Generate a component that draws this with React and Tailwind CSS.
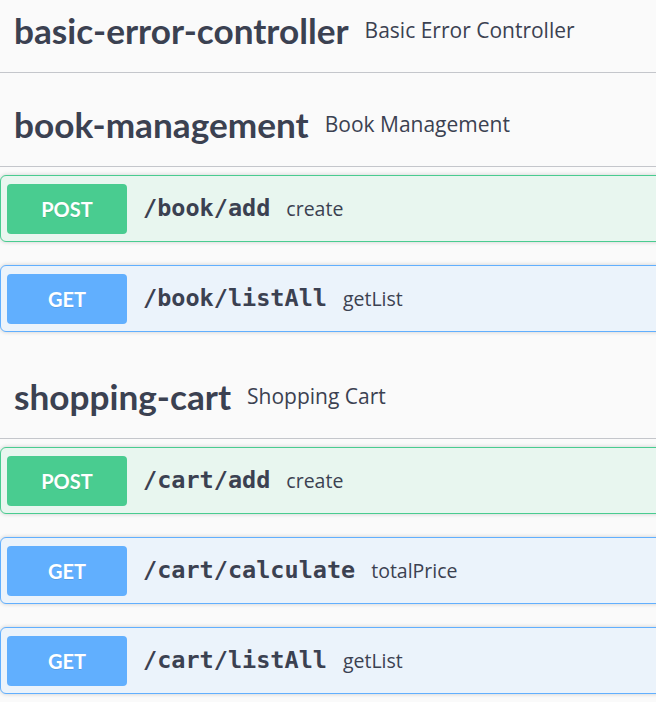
import React from 'react';

const tags = [
  { name: 'basic-error-controller', description: 'Basic Error Controller', ops: [] },
  {
    name: 'book-management',
    description: 'Book Management',
    ops: [
      { method: 'POST', path: '/book/add', summary: 'create' },
      { method: 'GET', path: '/book/listAll', summary: 'getList' },
    ],
  },
  {
    name: 'shopping-cart',
    description: 'Shopping Cart',
    ops: [
      { method: 'POST', path: '/cart/add', summary: 'create' },
      { method: 'GET', path: '/cart/calculate', summary: 'totalPrice' },
      { method: 'GET', path: '/cart/listAll', summary: 'getList' },
    ],
  },
];

const methodStyles = {
  POST: {
    block: 'border-[#49cc90] bg-[#e8f6ef]',
    badge: 'bg-[#49cc90]',
  },
  GET: {
    block: 'border-[#61affe] bg-[#ebf3fb]',
    badge: 'bg-[#61affe]',
  },
};

function OpBlock({ method, path, summary }) {
  const style = methodStyles[method];
  return (
    <div
      className={`mb-[23px] flex h-[67px] items-center rounded-[6px] border px-[6px] shadow-[0_0_4px_rgba(0,0,0,0.19)] ${style.block}`}
    >
      <span
        className={`flex h-[50px] w-[120px] shrink-0 items-center justify-center rounded-[4px] font-['Lato',sans-serif] text-[20px] font-bold text-white [text-shadow:0_1px_0_rgba(0,0,0,0.1)] ${style.badge}`}
      >
        {method}
      </span>
      <span className="ml-[16px] mt-[1px] font-['DejaVu_Sans_Mono',monospace] text-[23.5px] font-bold text-[#3b4151]">
        {path}
      </span>
      <span className="ml-[16px] font-['Open_Sans',sans-serif] text-[19.5px] text-[#3b4151]">
        {summary}
      </span>
    </div>
  );
}

function TagSection({ name, description, ops, first }) {
  return (
    <section className={first ? '-mt-[11px] mb-[10px]' : 'mb-[3px]'}>
      <h3 className="mb-[8px] flex h-[84px] items-center border-b border-[#c4c6cb] pl-[14px] text-[#3b4151]">
        <span className="font-['Lato',sans-serif] text-[35.2px] font-bold">{name}</span>
        <small className="ml-[16px] font-['Open_Sans',sans-serif] text-[21px]">{description}</small>
      </h3>
      {ops.map((op) => (
        <OpBlock key={op.path} {...op} />
      ))}
    </section>
  );
}

export default function App() {
  return (
    <div className="h-[702px] w-[656px] overflow-hidden bg-[#fafafa]">
      <div className="-mt-[1px] w-[720px]">
        {tags.map((tag, i) => (
          <TagSection key={tag.name} {...tag} first={i === 0} />
        ))}
      </div>
    </div>
  );
}
